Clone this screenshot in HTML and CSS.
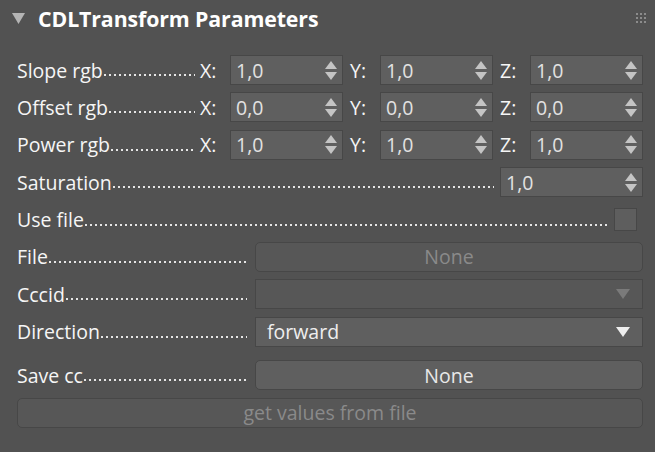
FILE: index.html
```html
<!DOCTYPE html>
<html>
<head>
<meta charset="utf-8">
<link rel="stylesheet" href="styles.css">
</head>
<body>
<div class="panel">
  <div class="header">
    <svg class="collapse" width="13" height="11" viewBox="0 0 13 11"><polygon points="0,0 13,0 6.5,11" fill="#b4b4b4"/></svg>
    <span class="title">CDLTransform Parameters</span>
    <svg class="grip" width="10" height="10" viewBox="0 0 10 10">
      <g fill="#8c8c8c">
        <rect x="0" y="0" width="2" height="2"/><rect x="4" y="0" width="2" height="2"/><rect x="8" y="0" width="2" height="2"/>
        <rect x="0" y="4" width="2" height="2"/><rect x="4" y="4" width="2" height="2"/><rect x="8" y="4" width="2" height="2"/>
        <rect x="0" y="8" width="2" height="2"/><rect x="4" y="8" width="2" height="2"/><rect x="8" y="8" width="2" height="2"/>
      </g>
    </svg>
  </div>
  <div class="rows">
    <div class="row">
      <div class="label lab-xyz"><span class="txt">Slope rgb</span><span class="dots"></span></div>
      <span class="axis">X:</span><div class="spin"><span class="val">1,0</span><span class="arrows"><i class="up"></i><i class="down"></i></span></div>
      <span class="axis">Y:</span><div class="spin"><span class="val">1,0</span><span class="arrows"><i class="up"></i><i class="down"></i></span></div>
      <span class="axis">Z:</span><div class="spin"><span class="val">1,0</span><span class="arrows"><i class="up"></i><i class="down"></i></span></div>
    </div>
    <div class="row">
      <div class="label lab-xyz"><span class="txt">Offset rgb</span><span class="dots"></span></div>
      <span class="axis">X:</span><div class="spin"><span class="val">0,0</span><span class="arrows"><i class="up"></i><i class="down"></i></span></div>
      <span class="axis">Y:</span><div class="spin"><span class="val">0,0</span><span class="arrows"><i class="up"></i><i class="down"></i></span></div>
      <span class="axis">Z:</span><div class="spin"><span class="val">0,0</span><span class="arrows"><i class="up"></i><i class="down"></i></span></div>
    </div>
    <div class="row">
      <div class="label lab-xyz"><span class="txt">Power rgb</span><span class="dots"></span></div>
      <span class="axis">X:</span><div class="spin"><span class="val">1,0</span><span class="arrows"><i class="up"></i><i class="down"></i></span></div>
      <span class="axis">Y:</span><div class="spin"><span class="val">1,0</span><span class="arrows"><i class="up"></i><i class="down"></i></span></div>
      <span class="axis">Z:</span><div class="spin"><span class="val">1,0</span><span class="arrows"><i class="up"></i><i class="down"></i></span></div>
    </div>
    <div class="row">
      <div class="label lab-grow"><span class="txt">Saturation</span><span class="dots"></span></div>
      <div class="spin spin-sat"><span class="val">1,0</span><span class="arrows"><i class="up"></i><i class="down"></i></span></div>
    </div>
    <div class="row">
      <div class="label lab-grow"><span class="txt">Use file</span><span class="dots"></span></div>
      <div class="check"></div>
    </div>
    <div class="row">
      <div class="label lab-wide"><span class="txt">File</span><span class="dots"></span></div>
      <div class="button disabled">None</div>
    </div>
    <div class="row">
      <div class="label lab-wide"><span class="txt">Cccid</span><span class="dots"></span></div>
      <div class="combo disabled"><span class="val"></span><i class="drop"></i></div>
    </div>
    <div class="row">
      <div class="label lab-wide"><span class="txt">Direction</span><span class="dots"></span></div>
      <div class="combo"><span class="val">forward</span><i class="drop"></i></div>
    </div>
    <div class="row row-save">
      <div class="label lab-wide"><span class="txt">Save cc</span><span class="dots"></span></div>
      <div class="button">None</div>
    </div>
    <div class="row">
      <div class="button disabled full">get values from file</div>
    </div>
  </div>
</div>
</body>
</html>
```

FILE: styles.css
```css
html, body {
  margin: 0;
  padding: 0;
  background: #525252;
}
body {
  width: 655px;
  height: 452px;
  overflow: hidden;
  font-family: "Open Sans", "Noto Sans", sans-serif;
  color: #f6f6f6;
}
.panel {
  display: flex;
  flex-direction: column;
}
.header {
  display: flex;
  align-items: center;
  height: 38px;
  padding: 0 9px 0 12px;
}
.collapse {
  flex: none;
  margin-top: -2px;
}
.title {
  margin-left: 13px;
  font-weight: 700;
  font-size: 21.3px;
  color: #ffffff;
  letter-spacing: -0.1px;
  flex: 1;
  margin-top: -1px;
}
.grip {
  flex: none;
  margin-top: -2px;
}
.rows {
  display: flex;
  flex-direction: column;
  gap: 7.4px;
  padding: 17px 12px 0 17px;
}
.row {
  display: flex;
  align-items: center;
  height: 30px;
  font-size: 19.5px;
}
.row-save {
  margin-top: 6px;
}
.label {
  display: flex;
  align-items: center;
  white-space: nowrap;
  min-width: 0;
}
.label .txt {
  flex: none;
}
.label .dots {
  flex: 1;
  height: 2px;
  margin: 10px 0 0 1px;
  min-width: 0;
  background-image: linear-gradient(to right, #e6e6e6 2px, transparent 2px);
  background-size: 5px 2px;
  background-repeat: repeat-x;
}
.lab-xyz {
  width: 178px;
  margin-right: 5px;
}
.lab-grow {
  flex: 1;
  margin-right: 6px;
}
.lab-wide {
  width: 230px;
  margin-right: 8px;
}
.axis {
  width: 30px;
  flex: none;
}
.axis + .spin {
  margin-right: 7px;
}
.spin {
  box-sizing: border-box;
  width: 113px;
  height: 30px;
  flex: none;
  display: flex;
  align-items: center;
  background: #5f5f5f;
  border: 1px solid #474747;
  padding: 0 5px 0 5px;
  color: #e2e2e2;
}
.row .spin:last-child {
  margin-right: 0;
}
.spin-sat {
  width: 143px;
}
.spin .val {
  flex: 1;
}
.arrows {
  display: flex;
  flex-direction: column;
  gap: 3px;
}
.arrows i {
  display: block;
  width: 0;
  height: 0;
  border-left: 6px solid transparent;
  border-right: 6px solid transparent;
}
.arrows .up {
  border-bottom: 8px solid #c4c4c4;
}
.arrows .down {
  border-top: 8px solid #c4c4c4;
}
.check {
  box-sizing: border-box;
  width: 23px;
  height: 23px;
  margin-right: 6px;
  background: #5e5e5e;
  border: 1px solid #474747;
}
.button {
  box-sizing: border-box;
  flex: 1;
  height: 30px;
  display: flex;
  align-items: center;
  justify-content: center;
  background: #5f5f5f;
  border: 1px solid #474747;
  border-radius: 5px;
  color: #e8e8e8;
}
.button.disabled {
  background: #575757;
  color: #8a8a8a;
}
.combo {
  box-sizing: border-box;
  flex: 1;
  height: 30px;
  display: flex;
  align-items: center;
  background: #5f5f5f;
  border: 1px solid #474747;
  padding: 0 12px 0 11px;
  color: #eeeeee;
}
.combo .val {
  flex: 1;
}
.combo.disabled {
  background: #575757;
}
.drop {
  width: 0;
  height: 0;
  border-left: 7px solid transparent;
  border-right: 7px solid transparent;
  border-top: 10px solid #eeeeee;
}
.combo.disabled .drop {
  border-top-color: #7a7a7a;
}
```
